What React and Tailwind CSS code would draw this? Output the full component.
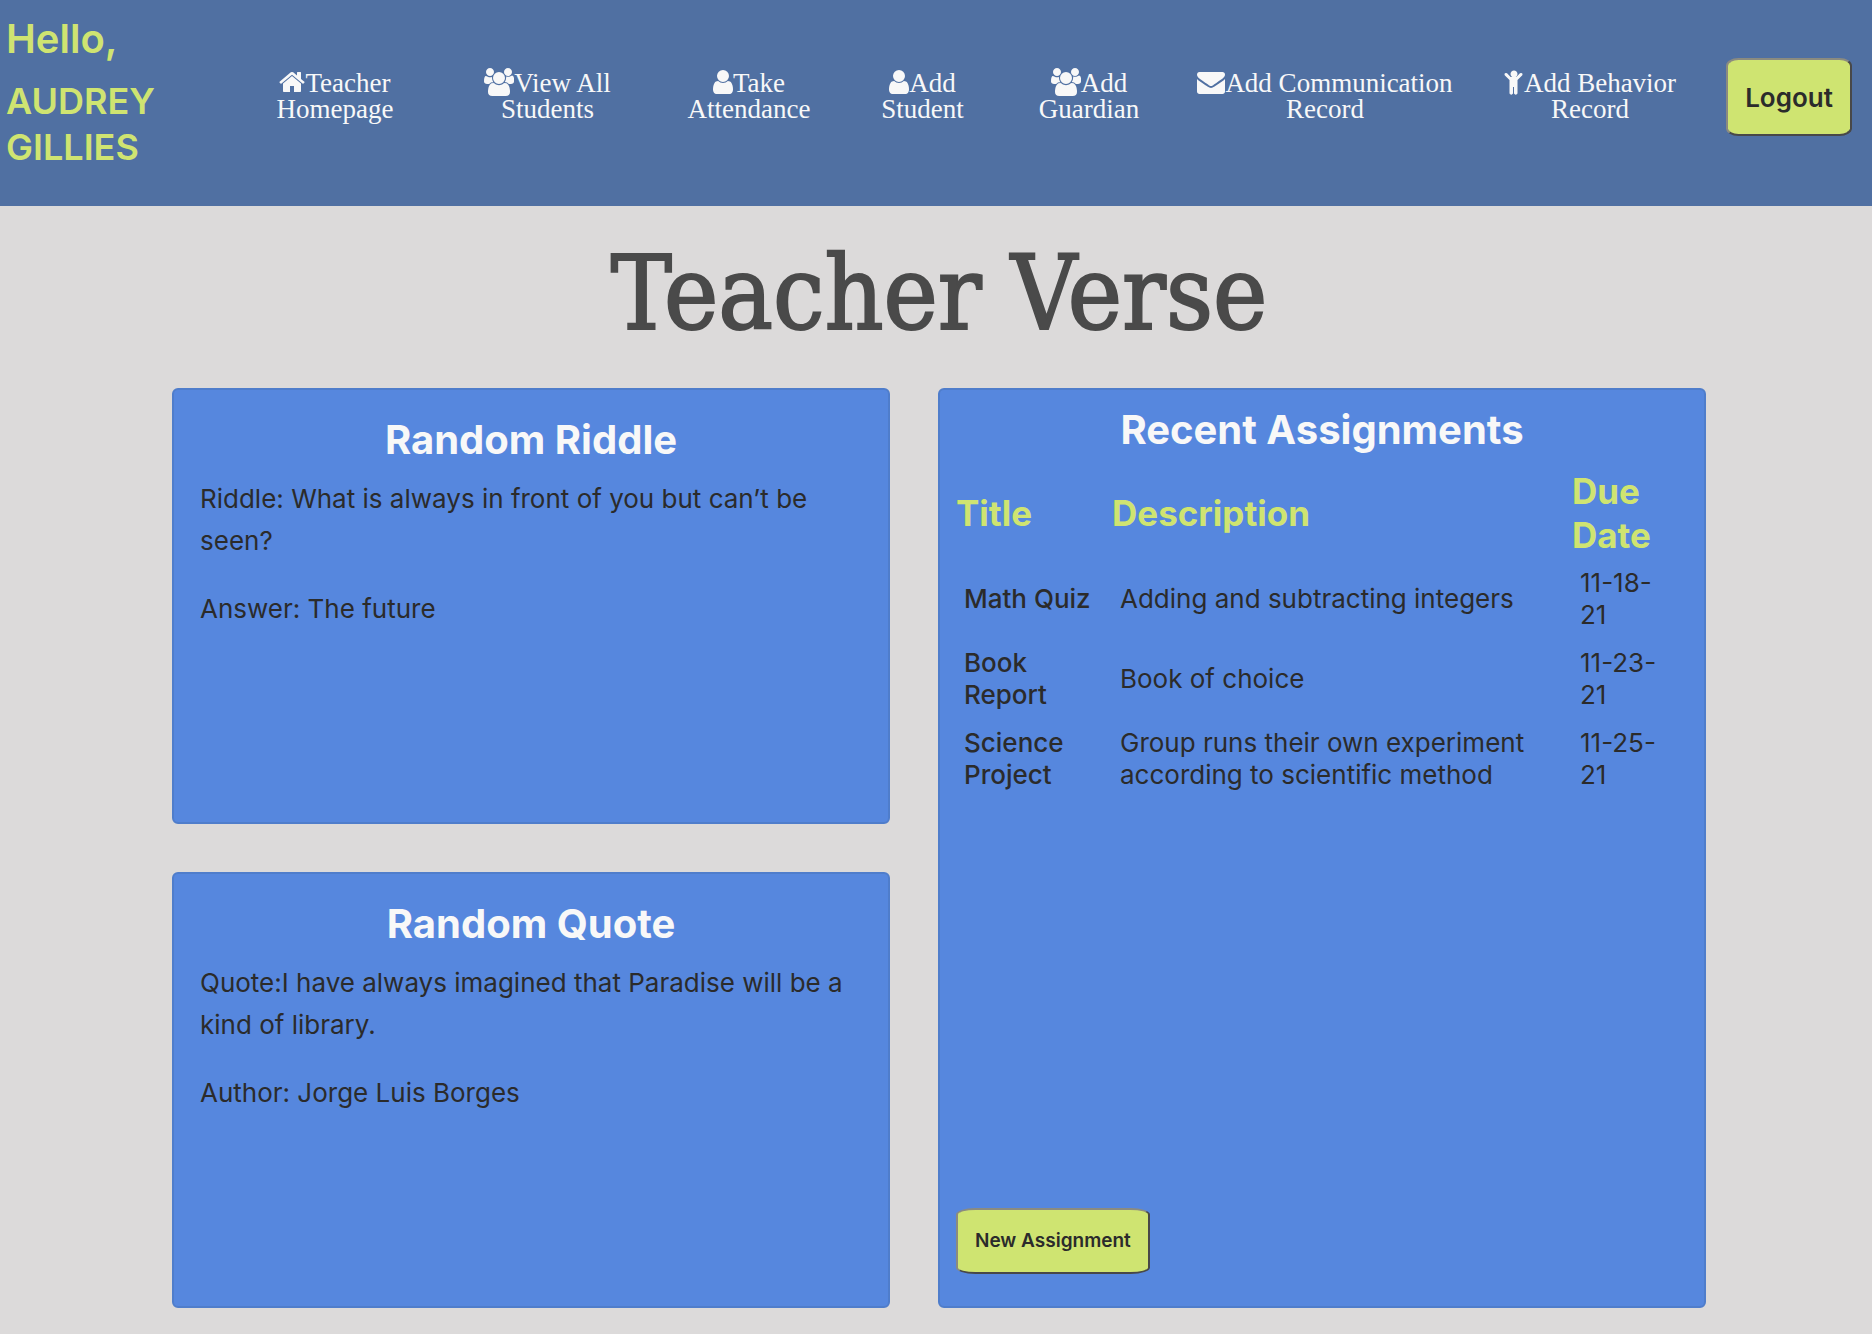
import React from "react";

const ICONS = {
  home: {
    box: "64 0 1664 1792",
    size: "w-[26px]",
    d: "M1472 992v480q0 26-19 45t-45 19h-384v-384h-256v384h-384q-26 0-45-19t-19-45v-480q0-1 .5-3t.5-3l575-474 575 474q1 2 1 6zm223-69l-62 74q-8 9-21 11h-3q-13 0-21-7l-692-577-692 577q-12 8-24 7-13-2-21-11l-62-74q-8-10-7-23.5t11-21.5l719-599q32-26 76-26t76 26l244 204v-195q0-14 9-23t23-9h192q14 0 23 9t9 23v408l219 182q10 8 11 21.5t-7 23.5z",
  },
  users: {
    box: "64 0 1920 1792",
    size: "w-[30px]",
    d: "M657 896q-162 5-265 128h-134q-82 0-138-40.5t-56-118.5q0-353 124-353 6 0 43.5 21t97.5 42.5 119 21.5q67 0 133-23-5 37-5 66 0 159 93 293zm1071 637q0 120-73 189.5t-194 69.5h-874q-121 0-194-69.5t-73-189.5q0-53 3.5-103.5t14-109 26.5-108.5 43-97.5 62-81 85.5-53.5 111.5-20q10 0 43 21.5t73 48 107 48 135 21.5 135-21.5 107-48 73-48 43-21.5q61 0 111.5 20t85.5 53.5 62 81 43 97.5 26.5 108.5 14 109 3.5 103.5zm-1024-1277q0 106-75 181t-181 75-181-75-75-181 75-181 181-75 181 75 75 181zm704 384q0 159-112.5 271.5t-271.5 112.5-271.5-112.5-112.5-271.5 112.5-271.5 271.5-112.5 271.5 112.5 112.5 271.5zm576 225q0 78-56 118.5t-138 40.5h-134q-103-123-265-128 93-134 93-293 0-29-5-66 66 23 133 23 59 0 119-21.5t97.5-42.5 43.5-21q124 0 124 353zm-128-609q0 106-75 181t-181 75-181-75-75-181 75-181 181-75 181 75 75 181z",
  },
  user: {
    box: "256 0 1280 1792",
    size: "w-5",
    d: "M1536 1399q0 109-62.5 187t-150.5 78h-854q-88 0-150.5-78t-62.5-187q0-85 8.5-160.5t31.5-152 58.5-131 94-89 134.5-34.5q131 128 313 128t313-128q76 0 134.5 34.5t94 89 58.5 131 31.5 152 8.5 160.5zm-256-887q0 159-112.5 271.5t-271.5 112.5-271.5-112.5-112.5-271.5 112.5-271.5 271.5-112.5 271.5 112.5 112.5 271.5z",
  },
  envelope: {
    box: "0 0 1792 1792",
    size: "w-7",
    d: "M1792 710v794q0 66-47 113t-113 47h-1472q-66 0-113-47t-47-113v-794q44 49 101 87 362 246 497 345 57 42 92.5 65.5t94.5 48 110 24.5h2q51 0 110-24.5t94.5-48 92.5-65.5q170-123 498-345 57-39 100-87zm0-294q0 79-49 151t-122 123q-376 261-468 325-10 7-42.5 31t-54 38.5-52 32.5-57.5 27-50 9h-2q-23 0-50-9t-57.5-27-52-32.5-54-38.5-42.5-31q-91-64-262-182.5t-205-142.5q-62-42-117-115.5t-55-136.5q0-78 41.5-130t118.5-52h1472q65 0 112.5 47t47.5 113z",
  },
  child: {
    box: "224 0 1280 1792",
    size: "w-5",
    d: "M1380 476l-292 292v824q0 46-33 79t-79 33-79-33-33-79v-384h-64v384q0 46-33 79t-79 33-79-33-33-79v-824l-292-292q-28-28-28-68t28-68q29-28 68.5-28t67.5 28l228 228h368l228-228q28-28 68-28t68 28q28 29 28 68.5t-28 67.5zm-292-92q0 93-65.5 158.5t-158.5 65.5-158.5-65.5-65.5-158.5 65.5-158.5 158.5-65.5 158.5 65.5 65.5 158.5z",
  },
};

const LINKS = [
  ["home", "Teacher", "Homepage"],
  ["users", "View All", "Students"],
  ["user", "Take", "Attendance"],
  ["user", "Add", "Student"],
  ["users", "Add", "Guardian"],
  ["envelope", "Add Communication", "Record"],
  ["child", "Add Behavior", "Record"],
];

const ASSIGNMENTS = [
  ["Math Quiz", "Adding and subtracting integers", "11-18-21"],
  ["Book Report", "Book of choice", "11-23-21"],
  ["Science Project", "Group runs their own experiment according to scientific method", "11-25-21"],
];

function Icon({ name }) {
  const { box, size, d } = ICONS[name];
  return (
    <svg
      viewBox={box}
      className={`-mt-1 inline-block h-7 align-[-4px] ${size}`}
      fill="currentColor"
      aria-hidden="true"
    >
      <path d={d} />
    </svg>
  );
}

function Card({ title, children }) {
  return (
    <section className="flex-1 rounded-md border-2 border-[#4f7dcb] bg-[#5687de] px-[26px] pt-[26px]">
      <h2 className="mb-[14px] text-center text-[40px] leading-12 font-bold text-[#f8f8f8]">{title}</h2>
      <div className="space-y-[26px] text-[26px] leading-[42px]">{children}</div>
    </section>
  );
}

export default function App() {
  return (
    <div className="min-h-screen bg-[#dcdada] font-['Inter',sans-serif] text-[#2b2b2b]">
      <header className="grid min-h-[206px] grid-cols-[230fr_210fr_215fr_188fr_159fr_174fr_298fr_232fr_166fr] items-center bg-[#5070a2] pb-3">
        <div className="self-start pt-3 pl-[6px] font-semibold text-[#cfe471]">
          <h1 className="mb-3 text-[40px] leading-[54px]">Hello,</h1>
          <p className="text-[36px] leading-[46px]">
            AUDREY
            <br />
            GILLIES
          </p>
        </div>
        <nav className="contents">
          {LINKS.map(([icon, first, second]) => (
            <a
              key={first + second}
              href="#"
              className="pb-[2px] text-center font-['Liberation_Serif',serif] text-[27px] leading-[26px] whitespace-nowrap text-[#f8f8f8]"
            >
              <Icon name={icon} />
              {first}
              <br />
              {second}
            </a>
          ))}
        </nav>
        <button
          type="button"
          className="h-[78px] justify-self-center rounded-[10%] border-2 border-t-[#8b8b80] border-r-[#484848] border-b-[#484848] border-l-[#8b8b80] bg-[#cfe471] px-[17px] text-[26px] font-semibold"
        >
          Logout
        </button>
      </header>

      <h1 className="pt-7 pb-[34px] pl-[6px] text-center font-['DejaVu_Serif_Condensed','DejaVu_Serif',serif] text-[102px] leading-[120px] text-[#4a4a4a] [-webkit-text-stroke:2px_#4a4a4a]">
        Teacher Verse
      </h1>

      <main className="grid min-h-[920px] grid-cols-[718fr_768fr] gap-12 pr-[166px] pl-[172px]">
        <div className="flex flex-col gap-12">
          <Card title="Random Riddle">
            <p>Riddle: What is always in front of you but can’t be seen?</p>
            <p>Answer: The future</p>
          </Card>
          <Card title="Random Quote">
            <p>Quote:I have always imagined that Paradise will be a kind of library.</p>
            <p>Author: Jorge Luis Borges</p>
          </Card>
        </div>

        <section className="flex flex-col items-start rounded-md border-2 border-[#4f7dcb] bg-[#5687de] px-4 pt-4 pb-8">
          <h2 className="mb-[15px] self-center text-[40px] leading-12 font-bold text-[#f8f8f8]">
            Recent Assignments
          </h2>
          <table className="w-full table-fixed text-left text-[26px] leading-8">
            <thead>
              <tr className="text-[35px] leading-11 text-[#cfe471]">
                <th scope="col" className="w-[156px] p-0 pb-[2px] font-bold">Title</th>
                <th scope="col" className="p-0 pb-[2px] font-bold">Description</th>
                <th scope="col" className="w-[116px] p-0 pb-[2px] font-bold">Due Date</th>
              </tr>
            </thead>
            <tbody>
              {ASSIGNMENTS.map(([title, text, due]) => (
                <tr key={title}>
                  <th scope="row" className="py-2 pl-2 font-medium">{title}</th>
                  <td className="px-2 py-2">{text}</td>
                  <td className="py-2 pr-6 pl-2">{due}</td>
                </tr>
              ))}
            </tbody>
          </table>
          <button
            type="button"
            className="mt-auto h-[66px] rounded-[10%] border-2 border-t-[#8b8b80] border-r-[#484848] border-b-[#484848] border-l-[#8b8b80] bg-[#cfe471] px-[17px] text-[19px] font-semibold"
          >
            New Assignment
          </button>
        </section>
      </main>
    </div>
  );
}
